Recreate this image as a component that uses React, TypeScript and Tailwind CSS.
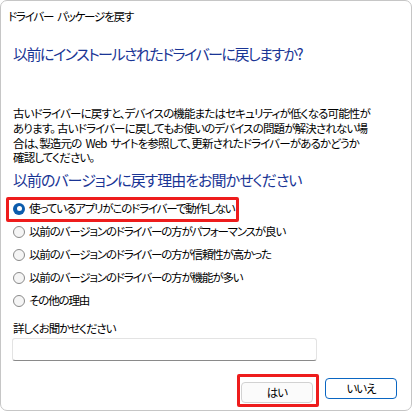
import { useState } from "react";

const REASONS = [
  "使っているアプリがこのドライバーで動作しない",
  "以前のバージョンのドライバーの方がパフォーマンスが良い",
  "以前のバージョンのドライバーの方が信頼性が高かった",
  "以前のバージョンのドライバーの方が機能が多い",
  "その他の理由",
];

const Radio = ({ checked }: { checked: boolean }) => {
  if (checked) {
    return (
      <span className="flex h-[12px] w-[12px] shrink-0 items-center justify-center rounded-full bg-[#0b5cad]">
        <span className="h-[5px] w-[5px] rounded-full bg-white" />
      </span>
    );
  }
  return (
    <span className="h-[12px] w-[12px] shrink-0 rounded-full border border-[#8a8a8a] bg-[#f5f5f5]" />
  );
};

const App = () => {
  const [selected, setSelected] = useState(0);

  return (
    <div className="h-[412px] w-[412px] overflow-hidden bg-white font-['Noto_Sans_CJK_JP',sans-serif] text-black [font-feature-settings:'palt']">
      <div className="flex h-[411px] w-[412px] flex-col rounded-[7px] border border-[#c6c6c6]">
        {/* タイトルバー */}
        <div className="flex h-[29px] shrink-0 items-center px-[7px] text-[11.5px] leading-[16px] tracking-[-1.2px]">
          ドライバー<span className="ml-[4px]">パッケージを戻す</span>
        </div>

        <div className="flex flex-1 flex-col px-[12px]">
          <h1 className="mt-[13px] text-[15px] leading-[22px] tracking-[-1.5px] text-[#1a3595]">
            以前にインストールされたドライバーに戻しますか?
          </h1>

          <p className="mt-[41px] whitespace-nowrap text-[11.5px] leading-[14.8px] tracking-[-0.85px]">
            古いドライバーに戻すと、デバイスの機能またはセキュリティが低くなる可能性が
            <br />
            あります。<span className="ml-[2px]">古いドライバーに戻してもお使いのデバイスの問題が解決されない場</span>
            <br />
            合は、製造元の<span className="mx-[4px]">Web</span>サイトを参照して、更新されたドライバーがあるかどうか
            <br />
            確認してください。
          </p>

          <h2 className="mt-[4px] text-[15px] leading-[22px] tracking-[-1px] text-[#1a3595]">
            以前のバージョンに戻す理由をお聞かせください
          </h2>

          {/* 理由の選択 */}
          <ul className="mt-[6px] flex flex-col text-[11.5px] leading-[17px] tracking-[-1.15px]">
            {REASONS.map((reason, i) => (
              <li key={reason} className="flex h-[23px] items-center">
                <label
                  className="relative flex cursor-pointer items-center gap-[4px]"
                  onClick={() => setSelected(i)}
                >
                  <Radio checked={selected === i} />
                  <span className="whitespace-nowrap">{reason}</span>
                  {i === 0 && (
                    <span className="pointer-events-none absolute -bottom-[5px] -left-[7px] -right-[5px] -top-[3px] rounded-[2px] border-[3px] border-[#ee1c1c]" />
                  )}
                </label>
              </li>
            ))}
          </ul>

          <label
            className="mt-[8px] text-[11.5px] leading-[16px] tracking-[-1.1px]"
            htmlFor="detail"
          >
            詳しくお聞かせください
          </label>
          <input
            id="detail"
            className="-ml-[1px] mt-[2px] h-[23px] w-[305px] rounded-[3px] border border-[#e3e3e3] border-b-[#8a8a8a] bg-white px-2 text-[12px] outline-none"
          />

          {/* ボタン */}
          <div className="mt-[17px] flex justify-end gap-[12px] pr-[2px]">
            <div className="relative">
              <button className="h-[21px] w-[72px] rounded-[4px] border border-[#d2d2d2] bg-[#fbfbfb] text-[11.5px] tracking-[-1px]">
                はい
              </button>
              <span className="pointer-events-none absolute -bottom-[4px] -left-[4px] -right-[6px] -top-[4px] rounded-[2px] border-[3px] border-[#ee1c1c]" />
            </div>
            <button className="h-[21px] w-[72px] rounded-[4px] border border-[#0a66c2] bg-white text-[11.5px] tracking-[-1px]">
              いいえ
            </button>
          </div>
        </div>
      </div>
    </div>
  );
};

export default App;
